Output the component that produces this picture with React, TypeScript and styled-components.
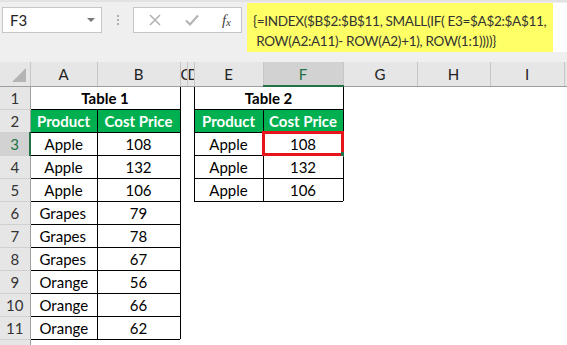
import styled, { createGlobalStyle } from 'styled-components';

const GlobalStyle = createGlobalStyle`
  html, body {
    margin: 0;
    padding: 0;
    background: #fff;
  }
  body {
    width: 567px;
    height: 345px;
    overflow: hidden;
    font-family: Lato, 'Open Sans', sans-serif;
    color: #000;
  }
`;

const COLS = [30, 67, 83, 7, 7, 69, 80, 74, 73, 74, 40];
const LETTERS = ['A', 'B', 'C', 'D', 'E', 'F', 'G', 'H', 'I', ''];

const table1 = [
  ['Apple', '108'],
  ['Apple', '132'],
  ['Apple', '106'],
  ['Grapes', '79'],
  ['Grapes', '78'],
  ['Grapes', '67'],
  ['Orange', '56'],
  ['Orange', '66'],
  ['Orange', '62'],
];

const table2 = [
  ['Apple', '108'],
  ['Apple', '132'],
  ['Apple', '106'],
];

const App: React.FC = () => {
  const rows = Array.from({ length: 12 }, (_, i) => i + 1);

  return (
    <Page>
      <GlobalStyle />
      <Toolbar>
        <NameBox>
          <span>F3</span>
          <Caret />
        </NameBox>
        <Grip>
          <i />
          <i />
          <i />
        </Grip>
        <FxBox>
          <svg width='14' height='14' viewBox='0 0 14 14'>
            <path d='M2 2 L12 12 M12 2 L2 12' stroke='#b4b4b4' strokeWidth='1.6' fill='none' />
          </svg>
          <svg width='16' height='14' viewBox='0 0 16 14'>
            <path d='M2 7.5 L6 11.5 L14 2.5' stroke='#b4b4b4' strokeWidth='2.2' fill='none' />
          </svg>
          <FxLabel>
            f<sub>x</sub>
          </FxLabel>
        </FxBox>
        <FormulaArea>
          <Highlight>
            <div>{'{=INDEX($B$2:$B$11, SMALL(IF( E3=$A$2:$A$11,'}</div>
            <div>{' ROW(A2:A11)- ROW(A2)+1), ROW(1:1))))}'}</div>
          </Highlight>
        </FormulaArea>
      </Toolbar>

      <Sheet>
        <colgroup>
          {COLS.map((w, i) => (
            <col key={i} style={{ width: w }} />
          ))}
        </colgroup>
        <thead>
          <tr>
            <Corner>
              <Triangle />
            </Corner>
            {LETTERS.map((l, i) => (
              <ColHead key={i} $active={l === 'F'}>
                <ColLabel>{l}</ColLabel>
              </ColHead>
            ))}
          </tr>
        </thead>
        <tbody>
          {rows.map((r) => {
            const t1 = r >= 3 ? table1[r - 3] : undefined;
            const t2 = r >= 3 ? table2[r - 3] : undefined;
            return (
              <tr key={r}>
                <RowHead $active={r === 3}>{r}</RowHead>
                {r === 1 && (
                  <Cell colSpan={2} $boxed $kind='title'>
                    Table 1
                  </Cell>
                )}
                {r === 2 && (
                  <>
                    <Cell $boxed $kind='head'>Product</Cell>
                    <Cell $boxed $kind='head'>Cost Price</Cell>
                  </>
                )}
                {r >= 3 &&
                  (t1 ? (
                    <>
                      <Cell $boxed $align={r >= 6 ? 'left' : 'center'}>
                        {t1[0]}
                      </Cell>
                      <Cell $boxed>{t1[1]}</Cell>
                    </>
                  ) : (
                    <>
                      <Cell />
                      <Cell />
                    </>
                  ))}
                <Cell />
                <Cell />
                {r === 1 && (
                  <Cell colSpan={2} $boxed $kind='title'>
                    Table 2
                  </Cell>
                )}
                {r === 2 && (
                  <>
                    <Cell $boxed $kind='head'>Product</Cell>
                    <Cell $boxed $kind='head'>Cost Price</Cell>
                  </>
                )}
                {r >= 3 &&
                  (t2 ? (
                    <>
                      <Cell $boxed>{t2[0]}</Cell>
                      <Cell $boxed $selected={r === 3}>
                        {t2[1]}
                      </Cell>
                    </>
                  ) : (
                    <>
                      <Cell />
                      <Cell />
                    </>
                  ))}
                <Cell />
                <Cell />
                <Cell />
                <Cell />
              </tr>
            );
          })}
        </tbody>
      </Sheet>
    </Page>
  );
};

const Page = styled.div`
  width: 567px;
  height: 345px;
  overflow: hidden;
  background: #fff;
`;

const Toolbar = styled.div`
  height: 62px;
  box-sizing: border-box;
  display: flex;
  align-items: flex-start;
  padding-left: 2px;
  background: #efefef;
  border-top: 2px solid #e2e2e2;
`;

const NameBox = styled.div`
  margin-top: 5px;
  width: 100px;
  height: 26px;
  box-sizing: border-box;
  border: 1px solid #c6c6c6;
  background: #fff;
  display: flex;
  align-items: center;
  justify-content: space-between;
  padding: 0 6px 0 7px;
  font-size: 15px;
  color: #222;
`;

const Caret = styled.span`
  width: 0;
  height: 0;
  border-left: 4px solid transparent;
  border-right: 4px solid transparent;
  border-top: 4px solid #777;
`;

const Grip = styled.div`
  width: 31px;
  height: 26px;
  margin-top: 5px;
  display: flex;
  flex-direction: column;
  align-items: center;
  justify-content: center;
  gap: 2px;

  i {
    display: block;
    width: 2px;
    height: 2px;
    background: #b0b0b0;
  }
`;

const FxBox = styled.div`
  margin-top: 5px;
  width: 109px;
  height: 26px;
  box-sizing: border-box;
  border: 1px solid #c6c6c6;
  background: #fff;
  display: flex;
  align-items: center;
  justify-content: space-between;
  padding: 0 10px 0 14px;
`;

const FxLabel = styled.span`
  font-family: 'Liberation Serif', serif;
  font-style: italic;
  font-size: 15px;
  color: #444;

  sub {
    font-size: 11px;
    vertical-align: -1px;
  }
`;

const FormulaArea = styled.div`
  flex: 1;
  margin-left: 5px;
  margin-top: 1px;
  height: 49px;
  background: #fff;
  display: flex;
`;

const Highlight = styled.div`
  width: 306px;
  height: 100%;
  box-sizing: border-box;
  background: #ffff66;
  padding: 8px 0 0 6px;
  font-size: 13.5px;
  letter-spacing: -0.3px;
  line-height: 20px;
  color: #333;
  white-space: pre;
`;

const Sheet = styled.table`
  table-layout: fixed;
  border-collapse: collapse;
  width: 604px;
  font-size: 15px;

  tr {
    height: 23px;
  }
`;

const Corner = styled.th`
  position: relative;
  background: #e6e6e6;
  border-right: 1px solid #c6c6c6;
  border-bottom: 1px solid #9e9e9e;
  padding: 0;
`;

const Triangle = styled.span`
  position: absolute;
  right: 4px;
  bottom: 4px;
  width: 0;
  height: 0;
  border-left: 14px solid transparent;
  border-bottom: 14px solid #b4b4b4;
`;

const ColHead = styled.th<{ $active?: boolean }>`
  height: 23px;
  padding: 0;
  overflow: hidden;
  font-weight: normal;
  font-size: 15px;
  color: ${(p) => (p.$active ? '#217346' : '#222')};
  background: ${(p) => (p.$active ? '#d2d2d2' : '#e6e6e6')};
  border-right: 1px solid #c6c6c6;
  border-bottom: ${(p) => (p.$active ? '2px solid #217346' : '1px solid #9e9e9e')};
`;

const ColLabel = styled.div`
  overflow: hidden;
  text-align: center;
  white-space: nowrap;
`;

const RowHead = styled.td<{ $active?: boolean }>`
  padding: 0;
  text-align: center;
  font-size: 15px;
  color: ${(p) => (p.$active ? '#217346' : '#333')};
  background: ${(p) => (p.$active ? '#d2d2d2' : '#e6e6e6')};
  border-bottom: 1px solid #d0d0d0;
  border-right: ${(p) => (p.$active ? '2px solid #217346' : '1px solid #9e9e9e')};
`;

const Cell = styled.td<{
  $boxed?: boolean;
  $kind?: 'title' | 'head' | 'data';
  $align?: 'left' | 'center';
  $selected?: boolean;
}>`
  position: relative;
  padding: ${(p) => (p.$align === 'left' ? '0 0 0 9px' : '0')};
  white-space: nowrap;
  overflow: visible;
  text-align: ${(p) => p.$align || 'center'};
  font-weight: ${(p) => (p.$kind === 'title' || p.$kind === 'head' ? 700 : 400)};
  color: ${(p) => (p.$kind === 'head' ? '#fff' : '#000')};
  background: ${(p) => (p.$kind === 'head' ? '#00b050' : '#fff')};
  border: ${(p) => (p.$boxed ? '1px solid #000' : 'none')};
  outline: ${(p) => (p.$selected ? '3px solid #e8141b' : 'none')};
  outline-offset: -2px;

  &::after {
    content: '';
    display: ${(p) => (p.$selected ? 'block' : 'none')};
    position: absolute;
    right: -3px;
    bottom: -2px;
    width: 5px;
    height: 5px;
    background: #217346;
  }
`;

export default App;
